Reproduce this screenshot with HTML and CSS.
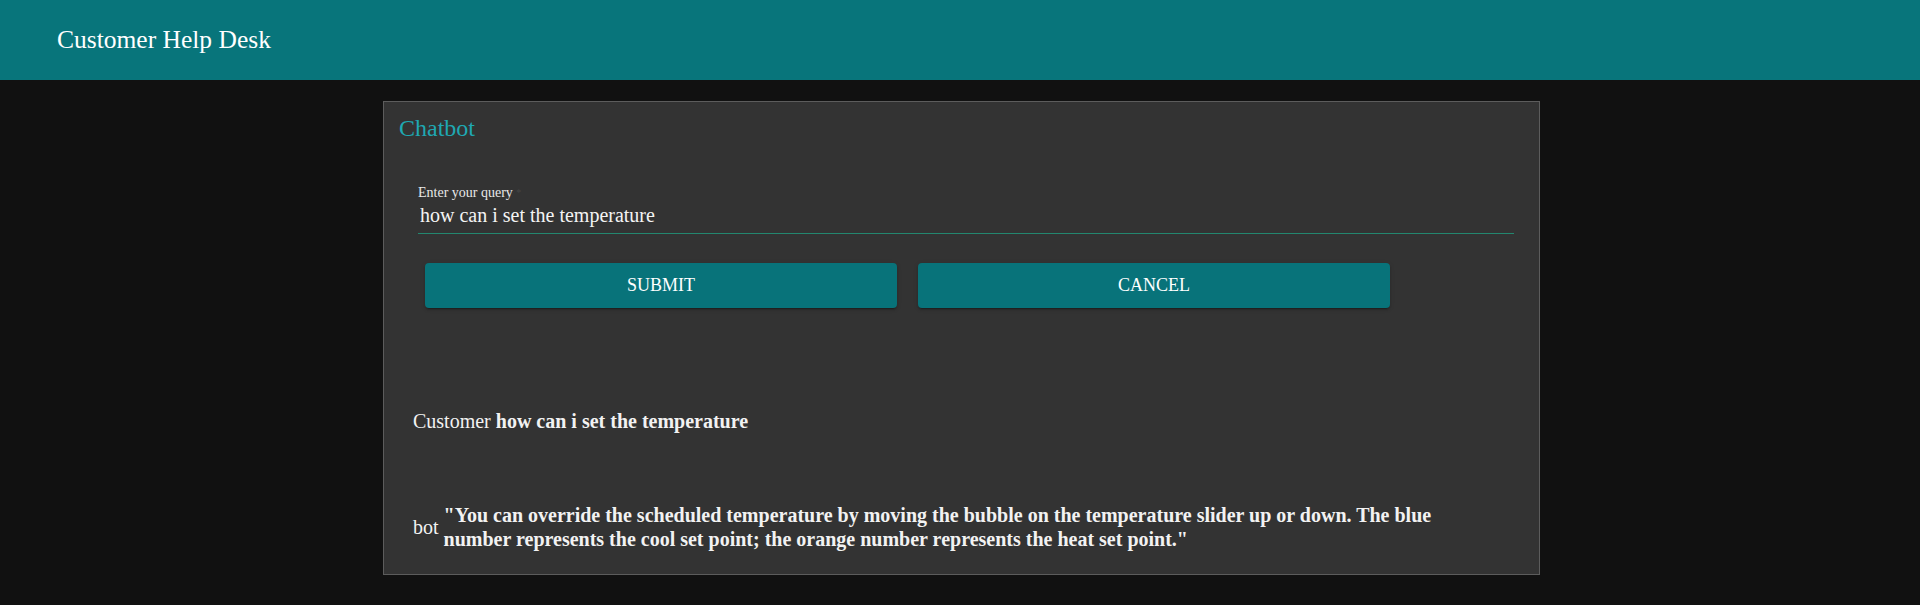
FILE: index.html
```html
<!DOCTYPE html>
<html lang="en">
<head>
<meta charset="utf-8">
<title>Customer Help Desk</title>
<link rel="stylesheet" href="styles.css">
</head>
<body>
<header class="topbar">
  <h1 class="brand">Customer Help Desk</h1>
</header>
<main class="page">
  <section class="card">
    <h2 class="card-title">Chatbot</h2>
    <form class="query-form">
      <label class="field">
        <span class="field-label">Enter your query <span class="req">*</span></span>
        <input class="field-input" type="text" value="how can i set the temperature">
      </label>
      <div class="actions">
        <button type="button" class="btn">SUBMIT</button>
        <button type="button" class="btn">CANCEL</button>
      </div>
    </form>
    <div class="chat">
      <p class="msg msg-customer"><span class="who">Customer</span> <b>how can i set the temperature</b></p>
      <div class="msg msg-bot">
        <span class="who">bot</span>
        <b class="bot-text">"You can override the scheduled temperature by moving the bubble on the temperature slider up or down. The blue number represents the cool set point; the orange number represents the heat set point."</b>
      </div>
    </div>
  </section>
</main>
</body>
</html>
```
FILE: styles.css
```css
* { box-sizing: border-box; }

html, body {
  margin: 0;
  padding: 0;
  background: #111111;
  font-family: "Liberation Serif", "Times New Roman", serif;
  color: #f2f2f2;
}

.topbar {
  height: 80px;
  background: #08757b;
  display: flex;
  align-items: center;
  padding-left: 57px;
}

.brand {
  margin: 0;
  font-size: 25.5px;
  line-height: 30px;
  font-weight: normal;
  color: #ffffff;
}

.page {
  padding-top: 21px;
}

.card {
  width: 1157px;
  margin-left: 383px;
  background: #333333;
  border: 1px solid #5c5c5c;
  padding: 10px 25px 23px 15px;
}

.card-title {
  margin: 0;
  font-size: 24px;
  line-height: 32px;
  font-weight: normal;
  color: #1fa8b2;
}

.query-form {
  margin-top: 41px;
  padding-left: 19px;
}

.field {
  display: flex;
  flex-direction: column;
}

.field-label {
  font-size: 14px;
  line-height: 16px;
  color: #e8e8e8;
}

.req {
  color: #454545;
  font-size: 10px;
  vertical-align: top;
}

.field-input {
  margin-top: 2px;
  height: 31px;
  padding: 0 0 6px 2px;
  border: none;
  border-bottom: 1px solid #23876f;
  background: transparent;
  color: #f4f4f4;
  font-family: inherit;
  font-size: 20px;
  line-height: 24px;
  outline: none;
}

.actions {
  margin-top: 29px;
  padding-left: 7px;
  display: flex;
  gap: 21px;
}

.btn {
  width: 472px;
  height: 45px;
  border: none;
  border-radius: 4px;
  background: #08737a;
  color: #ffffff;
  font-family: inherit;
  font-size: 18px;
  box-shadow: 0 3px 1px -2px rgba(0,0,0,.2), 0 2px 2px 0 rgba(0,0,0,.14), 0 1px 5px 0 rgba(0,0,0,.12);
}

.chat {
  margin-top: 101px;
  padding-left: 14px;
  font-size: 20px;
  line-height: 24px;
}

.msg {
  margin: 0;
}

.msg b {
  font-weight: bold;
}

.msg-bot {
  margin-top: 70px;
  display: flex;
  align-items: center;
  gap: 5px;
}

.bot-text {
  max-width: 1020px;
}
```
